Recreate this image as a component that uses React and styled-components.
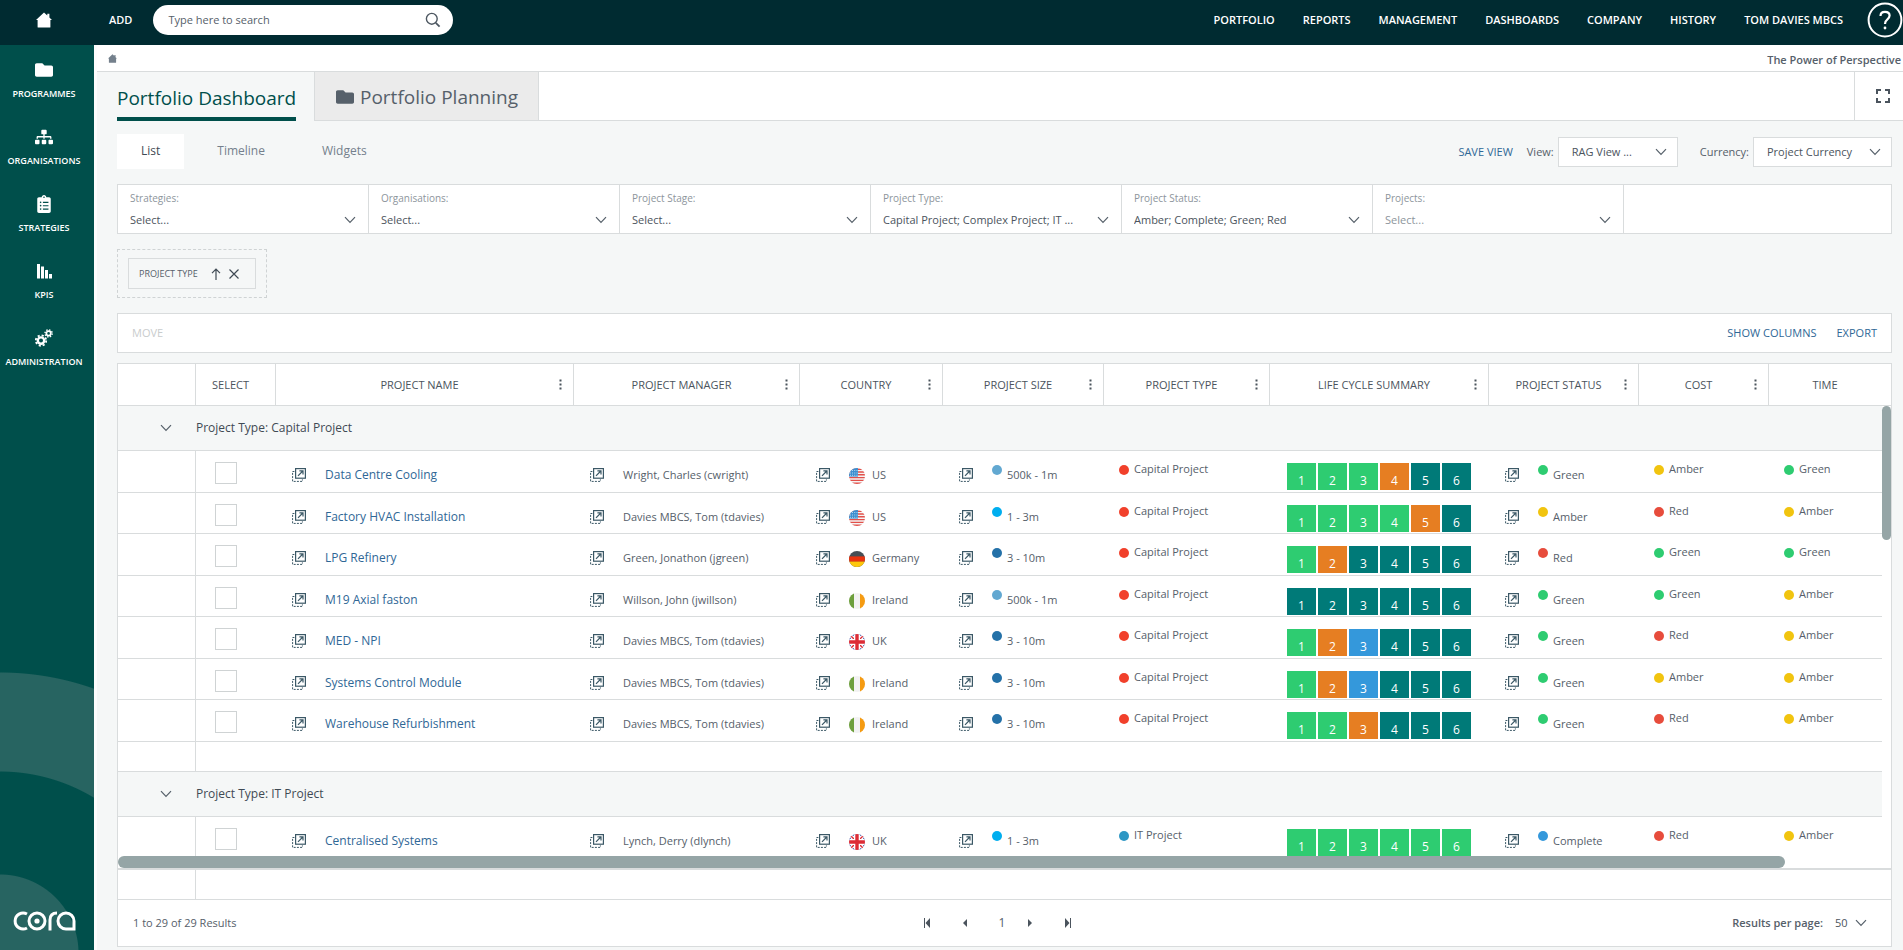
import { useState } from 'react';
import styled, { createGlobalStyle } from 'styled-components';
import { FaFolder, FaSitemap, FaClipboardList } from 'react-icons/fa';

const GlobalStyle = createGlobalStyle`
  * {
    box-sizing: border-box;
  }

  body {
    margin: 0;
    font-family: 'Open Sans', 'Noto Sans', sans-serif;
    font-size: 11px;
    line-height: 20px;
    color: #56606a;
    background: #f5f7f7;
  }

  button, input, select {
    font: inherit;
    color: inherit;
    margin: 0;
  }

  button {
    padding: 0;
    border: none;
    background: none;
    cursor: pointer;
  }

  a {
    color: inherit;
    text-decoration: none;
  }
`;

const navLinks = ['PORTFOLIO', 'REPORTS', 'MANAGEMENT', 'DASHBOARDS', 'COMPANY', 'HISTORY', 'TOM DAVIES MBCS'];

const filters = [
  { label: 'Strategies:', value: 'Select...' },
  { label: 'Organisations:', value: 'Select...' },
  { label: 'Project Stage:', value: 'Select...' },
  { label: 'Project Type:', value: 'Capital Project; Complex Project; IT ...' },
  { label: 'Project Status:', value: 'Amber; Complete; Green; Red' },
  { label: 'Projects:', value: 'Select...', muted: true }
];

const columns = [
  { width: 78 },
  { title: 'SELECT', width: 80 },
  { title: 'PROJECT NAME', width: 298, menu: true },
  { title: 'PROJECT MANAGER', width: 226, menu: true },
  { title: 'COUNTRY', width: 143, menu: true },
  { title: 'PROJECT SIZE', width: 161, menu: true },
  { title: 'PROJECT TYPE', width: 166, menu: true },
  { title: 'LIFE CYCLE SUMMARY', width: 219, menu: true },
  { title: 'PROJECT STATUS', width: 150, menu: true },
  { title: 'COST', width: 130, menu: true },
  { title: 'TIME' }
];

const ragColors = { Green: '#2ecc71', Amber: '#f1c40f', Red: '#e74c3c', Complete: '#3498db' };
const sizeColors = { '500k - 1m': '#62a8d1', '1 - 3m': '#00aeef', '3 - 10m': '#2471a8' };
const typeColors = { 'Capital Project': '#f1402b', 'IT Project': '#2e97c4' };
const stageColors = { g: '#2ecc71', o: '#e67e22', b: '#3498db', t: '#007a78' };

const tom = 'Davies MBCS, Tom (tdavies)';

const groups = [
  {
    type: 'Capital Project',
    rows: [
      ['Data Centre Cooling', 'Wright, Charles (cwright)', 'US', '500k - 1m', 'gggott', 'Green', 'Amber', 'Green'],
      ['Factory HVAC Installation', tom, 'US', '1 - 3m', 'ggggot', 'Amber', 'Red', 'Amber'],
      ['LPG Refinery', 'Green, Jonathon (jgreen)', 'Germany', '3 - 10m', 'gotttt', 'Red', 'Green', 'Green'],
      ['M19 Axial faston', 'Willson, John (jwillson)', 'Ireland', '500k - 1m', 'tttttt', 'Green', 'Green', 'Amber'],
      ['MED - NPI', tom, 'UK', '3 - 10m', 'gobttt', 'Green', 'Red', 'Amber'],
      ['Systems Control Module', tom, 'Ireland', '3 - 10m', 'gobttt', 'Green', 'Amber', 'Amber'],
      ['Warehouse Refurbishment', tom, 'Ireland', '3 - 10m', 'ggottt', 'Green', 'Red', 'Amber']
    ]
  },
  {
    type: 'IT Project',
    rows: [['Centralised Systems', 'Lynch, Derry (dlynch)', 'UK', '1 - 3m', 'gggggg', 'Complete', 'Red', 'Amber']]
  }
];

/* icons */

const HomeIcon = ({ size }) => (
  <svg width={size} height={size} viewBox="0 0 16 16" fill="currentColor" aria-hidden="true">
    <path d="M8 0.5 L11.3 3.6 V1.8 H13.4 V5.6 L16 8 H14.4 V15 Q14.4 15.6 13.8 15.6 H2.2 Q1.6 15.6 1.6 15 V8 H0 Z" />
  </svg>
);

const KpiIcon = () => (
  <svg width="15" height="15" viewBox="0 0 15 15" fill="currentColor" aria-hidden="true">
    <path d="M0 0h3v14.5H0zM4 2.5h3v12H4zM8 6h3v8.5H8zM12 10h3v4.5h-3z" />
  </svg>
);

const CogsIcon = () => (
  <svg width="18" height="18" viewBox="0 0 18 18" fill="none" stroke="currentColor" aria-hidden="true">
    <circle cx="6" cy="11.6" r="3.2" strokeWidth="2.4" />
    <circle cx="6" cy="11.6" r="5.2" strokeWidth="1.8" strokeDasharray="2.1 1.984" />
    <circle cx="13.6" cy="4.4" r="2.2" strokeWidth="1.7" />
    <circle cx="13.6" cy="4.4" r="3.6" strokeWidth="1.4" strokeDasharray="1.45 1.377" />
  </svg>
);

const SearchIcon = () => (
  <svg width="16" height="16" viewBox="0 0 16 16" fill="none" stroke="#4d5761" strokeWidth="1.4" aria-hidden="true">
    <circle cx="6.8" cy="6.8" r="5.4" />
    <path d="M10.8 10.8 L14.6 14.6" strokeWidth="1.8" />
  </svg>
);

const HelpIcon = () => (
  <svg width="36" height="36" viewBox="0 0 36 36" fill="none" stroke="#fff" aria-hidden="true">
    <circle cx="18" cy="18" r="16.4" strokeWidth="2" />
    <path d="M13.5 14 Q13.5 9.8 18 9.8 Q22.6 9.8 22.6 13.6 Q22.6 15.8 20.2 17.6 Q18 19.2 18 22" strokeWidth="2.2" />
    <circle cx="18" cy="26" r="1.4" fill="#fff" stroke="none" />
  </svg>
);

const ExpandIcon = () => (
  <svg width="14" height="14" viewBox="0 0 14 14" fill="none" stroke="#4b545d" strokeWidth="2" aria-hidden="true">
    <path d="M1 5V1h4M9 1h4v4M13 9v4H9M5 13H1V9" />
  </svg>
);

const Chevron = () => (
  <svg width="12" height="8" viewBox="0 0 12 8" fill="none" stroke="#56606a" strokeWidth="1.2" aria-hidden="true">
    <path d="M1 1.2 L6 6.4 L11 1.2" />
  </svg>
);

const ArrowUpIcon = () => (
  <svg width="10" height="12" viewBox="0 0 10 12" fill="none" stroke="#3f4a54" strokeWidth="1.2" aria-hidden="true">
    <path d="M5 12V1.2M1 5.2 L5 1.2 L9 5.2" />
  </svg>
);

const CloseIcon = () => (
  <svg width="10" height="10" viewBox="0 0 10 10" stroke="#3f4a54" strokeWidth="1.2" aria-hidden="true">
    <path d="M0.5 0.5 L9.5 9.5 M9.5 0.5 L0.5 9.5" />
  </svg>
);

const KebabIcon = () => (
  <svg width="3" height="11" viewBox="0 0 3 11" fill="#4b545d" aria-hidden="true">
    <path d="M0.5 0.5h2v2h-2zM0.5 4.5h2v2h-2zM0.5 8.5h2v2h-2z" />
  </svg>
);

const OpenIcon = () => (
  <svg width="14" height="14" viewBox="0 0 14 14" fill="none" stroke="#3b5866" aria-hidden="true">
    <rect x="3.6" y="0.6" width="9.8" height="9.6" strokeWidth="1.2" />
    <path d="M6 7.8 L10.8 3 M7.4 2.9 H11 V6.4" strokeWidth="1.2" />
    <path d="M2.4 3.5 H0.6 V13.4 H10.4 V11.4" strokeDasharray="2 1.2" />
  </svg>
);

const pagerPaths = {
  'First page': 'M0 0h1v10H0zM6 0v10L1.5 5z',
  'Previous page': 'M5 1v8L1 5z',
  'Next page': 'M1 1v8L5 5z',
  'Last page': 'M5 0h1v10H5zM0 0v10L4.5 5z'
};

const FlagArt = {
  US: (
    <>
      <rect width="16" height="16" fill="#f4f4f4" />
      <path d="M0 1.2h16M0 4h16M0 6.8h16M0 9.6h16M0 12.4h16M0 15.2h16" stroke="#e2504a" strokeWidth="1.4" />
      <rect width="9" height="8.6" fill="#3c8fd0" />
      <path d="M1 2.5h8M1 5h8M1 7.3h8" stroke="#fff" strokeWidth="0.8" strokeDasharray="0.8 1.4" />
    </>
  ),
  Germany: (
    <>
      <rect width="16" height="16" fill="#464e55" />
      <rect y="5.4" width="16" height="5.4" fill="#e8330f" />
      <rect y="10.6" width="16" height="5.4" fill="#fdc70c" />
    </>
  ),
  Ireland: (
    <>
      <rect width="16" height="16" fill="#f2f2f2" />
      <rect width="5" height="16" fill="#6d9f3c" />
      <rect x="11" width="5" height="16" fill="#f59b12" />
    </>
  ),
  UK: (
    <>
      <rect width="16" height="16" fill="#2d419b" />
      <path d="M0 0 L16 16 M16 0 L0 16" stroke="#fff" strokeWidth="4" />
      <path d="M0 0 L16 16 M16 0 L0 16" stroke="#dd2c36" strokeWidth="1.4" />
      <path d="M8 0V16M0 8H16" stroke="#fff" strokeWidth="6" />
      <path d="M8 0V16M0 8H16" stroke="#dd2c36" strokeWidth="3.4" />
    </>
  )
};

const CoraLogo = () => (
  <svg width="63" height="20" viewBox="0 0 63 20" fill="none" stroke="#fff" strokeWidth="3" role="img" aria-label="cora">
    <path d="M14 3 A8 8 0 1 0 14 17" />
    <circle cx="24" cy="10" r="8" />
    <circle cx="24" cy="10" r="2.6" fill="#fff" stroke="none" />
    <path d="M37 19.5 V9 Q37 2 44 2" />
    <path d="M61 19.5 V10 A8 8 0 1 0 53 18 H61" />
  </svg>
);

const sideItems = [
  { label: 'PROGRAMMES', icon: <FaFolder size={18} /> },
  { label: 'ORGANISATIONS', icon: <FaSitemap size={18} /> },
  { label: 'STRATEGIES', icon: <FaClipboardList size={18} /> },
  { label: 'KPIS', icon: <KpiIcon /> },
  { label: 'ADMINISTRATION', icon: <CogsIcon /> }
];

function SelectBox({ id, value, muted, label }) {
  return (
    <SelectWrap>
      <NativeSelect id={id} $muted={muted} aria-label={label} defaultValue={value}>
        <option>{value}</option>
      </NativeSelect>
      <Chevron />
    </SelectWrap>
  );
}

function OpenButton({ label }) {
  return (
    <IconButton aria-label={label}>
      <OpenIcon />
    </IconButton>
  );
}

function Tag({ value, colors }) {
  return (
    <TagCell>
      <Dot $color={colors[value]} $drop />
      {value}
    </TagCell>
  );
}

function ProjectRow({ row, type }) {
  const [name, manager, country, size, stages, status, cost, time] = row;

  return (
    <Row>
      <IndentCell />
      <Cell>
        <Checkbox type="checkbox" aria-label={`Select ${name}`} />
      </Cell>
      <Cell>
        <LinkCell>
          <OpenButton label={`Open ${name}`} />
          <ProjectLink href="#">{name}</ProjectLink>
        </LinkCell>
      </Cell>
      <Cell>
        <LinkCell>
          <OpenButton label={`Open ${manager}`} />
          {manager}
        </LinkCell>
      </Cell>
      <Cell>
        <LinkCell>
          <OpenButton label={`Open ${country}`} />
          <Value $gap={7}>
            <Flag viewBox="0 0 16 16" aria-hidden="true">
              {FlagArt[country]}
            </Flag>
            {country}
          </Value>
        </LinkCell>
      </Cell>
      <Cell>
        <LinkCell>
          <OpenButton label={`Open size ${size}`} />
          <Value $gap={5}>
            <Dot $color={sizeColors[size]} />
            {size}
          </Value>
        </LinkCell>
      </Cell>
      <Cell>
        <Tag value={type} colors={typeColors} />
      </Cell>
      <Cell>
        <Stages>
          {stages.split('').map((stage, i) => (
            <Stage key={i} $color={stageColors[stage]}>
              {i + 1}
            </Stage>
          ))}
        </Stages>
      </Cell>
      <Cell>
        <LinkCell>
          <OpenButton label={`Open status ${status}`} />
          <Value $gap={5}>
            <Dot $color={ragColors[status]} />
            {status}
          </Value>
        </LinkCell>
      </Cell>
      <Cell>
        <Tag value={cost} colors={ragColors} />
      </Cell>
      <Cell>
        <Tag value={time} colors={ragColors} />
      </Cell>
    </Row>
  );
}

function ProjectGroup({ group }) {
  const [open, setOpen] = useState(true);

  return (
    <tbody>
      <GroupRow>
        <GroupCell>
          <GroupToggle onClick={() => setOpen(!open)} aria-expanded={open} aria-label={`Toggle ${group.type}`}>
            <Chevron />
          </GroupToggle>
        </GroupCell>
        <GroupCell colSpan={10}>Project Type: {group.type}</GroupCell>
      </GroupRow>
      {open && group.rows.map((row) => <ProjectRow key={row[0]} row={row} type={group.type} />)}
      <SpacerRow>
        <IndentCell />
        <Cell colSpan={10} />
      </SpacerRow>
    </tbody>
  );
}

function PagerButton({ label }) {
  return (
    <PageButton aria-label={label}>
      <svg width="6" height="10" viewBox="0 0 6 10" fill="#4b545d" aria-hidden="true">
        <path d={pagerPaths[label]} />
      </svg>
    </PageButton>
  );
}

export default function App() {
  const [view, setView] = useState('List');

  return (
    <Shell>
      <GlobalStyle />
      <TopBar>
        <HomeLink href="#" aria-label="Home">
          <HomeIcon size={16} />
        </HomeLink>
        <AddButton>ADD</AddButton>
        <Search>
          <SearchInput type="search" placeholder="Type here to search" aria-label="Search" />
          <SearchIcon />
        </Search>
        <Nav>
          {navLinks.map((link) => (
            <a key={link} href="#">
              {link}
            </a>
          ))}
        </Nav>
        <HelpButton aria-label="Help">
          <HelpIcon />
        </HelpButton>
      </TopBar>

      <Body>
        <Sidebar>
          {sideItems.map((item) => (
            <SideLink key={item.label} href="#">
              <SideIcon>{item.icon}</SideIcon>
              {item.label}
            </SideLink>
          ))}
          <LogoBox>
            <CoraLogo />
          </LogoBox>
        </Sidebar>

        <Main>
          <Breadcrumb>
            <a href="#" aria-label="Dashboard home">
              <HomeIcon size={9} />
            </a>
            <strong>The Power of Perspective</strong>
          </Breadcrumb>

          <PageTabs>
            <ActiveTab>
              <TabTitle href="#">Portfolio Dashboard</TabTitle>
            </ActiveTab>
            <PlanningTab href="#">
              <FaFolder size={18} />
              Portfolio Planning
            </PlanningTab>
            <TabFill />
            <ExpandButton aria-label="Full screen">
              <ExpandIcon />
            </ExpandButton>
          </PageTabs>

          <Content>
            <ViewRow>
              {['List', 'Timeline', 'Widgets'].map((tab) => (
                <ViewTab key={tab} $active={tab === view} onClick={() => setView(tab)}>
                  {tab}
                </ViewTab>
              ))}
              <ViewOptions>
                <TextButton>SAVE VIEW</TextButton>
                <Option>
                  <label htmlFor="view">View:</label>
                  <BoxedSelect $width={120}>
                    <SelectBox id="view" value="RAG View ..." />
                  </BoxedSelect>
                </Option>
                <Option $spaced>
                  <label htmlFor="currency">Currency:</label>
                  <BoxedSelect $width={139}>
                    <SelectBox id="currency" value="Project Currency" />
                  </BoxedSelect>
                </Option>
              </ViewOptions>
            </ViewRow>

            <Filters>
              {filters.map((filter, i) => (
                <Filter key={filter.label}>
                  <FilterLabel htmlFor={`filter-${i}`}>{filter.label}</FilterLabel>
                  <SelectBox id={`filter-${i}`} value={filter.value} muted={filter.muted} />
                </Filter>
              ))}
            </Filters>

            <GroupPanel>
              <GroupChip>
                <ChipLabel>PROJECT TYPE</ChipLabel>
                <button aria-label="Sort ascending">
                  <ArrowUpIcon />
                </button>
                <button aria-label="Remove grouping">
                  <CloseIcon />
                </button>
              </GroupChip>
            </GroupPanel>

            <Toolbar>
              <TextButton disabled>MOVE</TextButton>
              <ToolbarRight>
                <TextButton>SHOW COLUMNS</TextButton>
                <TextButton>EXPORT</TextButton>
              </ToolbarRight>
            </Toolbar>

            <Grid>
              <Pane>
                <Table>
                  <colgroup>
                    {columns.map((col, i) => (
                      <Col key={i} $width={col.width} />
                    ))}
                  </colgroup>
                  <thead>
                    <tr>
                      {columns.map((col, i) => (
                        <HeadCell key={i}>
                          <HeadInner>
                            <HeadTitle>{col.title}</HeadTitle>
                            <MenuSlot>
                              {col.menu && (
                                <button aria-label={`${col.title} menu`}>
                                  <KebabIcon />
                                </button>
                              )}
                            </MenuSlot>
                          </HeadInner>
                        </HeadCell>
                      ))}
                    </tr>
                  </thead>
                  {groups.map((group) => (
                    <ProjectGroup key={group.type} group={group} />
                  ))}
                </Table>
                <VerticalTrack>
                  <VerticalThumb />
                </VerticalTrack>
                <HorizontalTrack>
                  <HorizontalThumb />
                </HorizontalTrack>
              </Pane>
              <SummaryRow>
                <SummaryIndent />
              </SummaryRow>
              <Pager>
                <span>1 to 29 of 29 Results</span>
                <Pages>
                  <PagerButton label="First page" />
                  <PagerButton label="Previous page" />
                  <PageNumber>1</PageNumber>
                  <PagerButton label="Next page" />
                  <PagerButton label="Last page" />
                </Pages>
                <PageSize>
                  <PageSizeLabel htmlFor="page-size">Results per page:</PageSizeLabel>
                  <PageSizeSelect>
                    <SelectBox id="page-size" value="50" />
                  </PageSizeSelect>
                </PageSize>
              </Pager>
            </Grid>
          </Content>
        </Main>
      </Body>
    </Shell>
  );
}

const line = '#d9dcdd';

const Shell = styled.div`
  display: flex;
  flex-direction: column;
  height: 100vh;
  overflow: hidden;
`;

const TopBar = styled.header`
  display: flex;
  align-items: center;
  flex: none;
  height: 45px;
  padding-bottom: 5px;
  color: #fff;
  background: #002b31;
  font-weight: 600;
`;

const HomeLink = styled.a`
  display: flex;
  justify-content: center;
  width: 88px;
`;

const AddButton = styled.button`
  margin: 0 21px;
`;

const Search = styled.div`
  display: flex;
  align-items: center;
  width: 300px;
  height: 30px;
  padding: 0 12px 0 15px;
  border-radius: 15px;
  background: #fff;
`;

const SearchInput = styled.input`
  flex: 1;
  min-width: 0;
  padding: 0;
  border: none;
  outline: none;
  background: none;
  font-weight: 400;
  color: #56606a;

  &::placeholder {
    color: #56606a;
    opacity: 1;
  }
`;

const Nav = styled.nav`
  display: flex;
  gap: 28px;
  margin-left: auto;
  white-space: nowrap;
`;

const HelpButton = styled.button`
  display: flex;
  margin-left: 24px;
`;

const Body = styled.div`
  display: flex;
  flex: 1;
  min-height: 0;
`;

const Sidebar = styled.aside`
  display: flex;
  flex-direction: column;
  flex: none;
  width: 94px;
  padding-top: 15px;
  color: #fff;
  background: radial-gradient(
    circle at 0 calc(100% + 3px),
    #276461 78px,
    #004f4b 79px,
    #004f4b 181px,
    #276461 182px,
    #276461 280px,
    #004f4b 281px
  );
`;

const SideLink = styled.a`
  display: flex;
  flex-direction: column;
  align-items: center;
  height: 67px;
  padding-right: 6px;
  font-size: 9px;
  font-weight: 600;
  line-height: 16px;
`;

const SideIcon = styled.span`
  display: flex;
  align-items: center;
  height: 20px;
  margin-bottom: 6px;
`;

const LogoBox = styled.div`
  margin-top: auto;
  padding: 0 0 13px 13px;
`;

const Main = styled.main`
  display: flex;
  flex-direction: column;
  flex: 1;
  min-width: 0;
  border-left: 3px solid #fdfdfd;
`;

const Breadcrumb = styled.div`
  display: flex;
  align-items: center;
  justify-content: space-between;
  height: 27px;
  padding: 4px 2px 0 11px;
  border-bottom: 1px solid ${line};
  background: #fff;
  color: #74808c;

  a {
    display: flex;
    align-self: flex-start;
    padding-top: 5px;
  }

  strong {
    font-weight: 600;
    color: #56606a;
  }
`;

const PageTabs = styled.div`
  display: flex;
  height: 49px;
  font-size: 19px;
  line-height: 26px;
`;

const ActiveTab = styled.div`
  display: flex;
  width: 217px;
  padding-left: 20px;
`;

const TabTitle = styled.a`
  padding-top: 13px;
  border-bottom: 4px solid #004f4b;
  color: #004f4b;
  white-space: nowrap;
`;

const PlanningTab = styled.a`
  display: flex;
  align-items: center;
  gap: 6px;
  width: 225px;
  padding: 2px 0 0 21px;
  border: solid ${line};
  border-width: 0 1px 1px;
  background: #ebebeb;
  white-space: nowrap;
`;

const TabFill = styled.div`
  flex: 1;
  border-bottom: 1px solid ${line};
  background: #fff;
`;

const ExpandButton = styled.button`
  display: flex;
  align-items: center;
  justify-content: center;
  width: 49px;
  padding-left: 8px;
  border: solid ${line};
  border-width: 0 0 1px 1px;
  background: #fff;
`;

const Content = styled.div`
  display: flex;
  flex-direction: column;
  flex: 1;
  min-height: 0;
  padding: 13px 11px 3px 20px;
`;

const ViewRow = styled.div`
  display: flex;
  align-items: center;
  margin-bottom: 15px;
`;

const ViewTab = styled.button`
  height: 35px;
  margin-right: 9px;
  padding: 0 24px 2px;
  font-size: 12px;
  color: ${(props) => (props.$active ? '#3f4a54' : '#74808c')};
  background: ${(props) => (props.$active ? '#fff' : 'none')};
`;

const ViewOptions = styled.div`
  display: flex;
  align-items: center;
  gap: 14px;
  margin-left: auto;
`;

const Option = styled.div`
  display: flex;
  align-items: center;
  gap: 4px;
  margin-left: ${(props) => (props.$spaced ? 8 : 0)}px;
`;

const TextButton = styled.button`
  color: #2f6796;

  &:disabled {
    color: #c9cccd;
    cursor: default;
  }
`;

const SelectWrap = styled.div`
  display: grid;
  grid-template-columns: minmax(0, 1fr) 12px;
  align-items: center;
  flex: 1;

  select {
    grid-area: 1 / 1 / 2 / 3;
    padding-right: 16px;
  }

  svg {
    grid-area: 1 / 2;
    pointer-events: none;
  }
`;

const NativeSelect = styled.select`
  width: 100%;
  padding: 0;
  border: none;
  outline: none;
  appearance: none;
  background: none;
  color: ${(props) => (props.$muted ? '#8d959c' : '#4b545d')};
`;

const BoxedSelect = styled.div`
  display: flex;
  width: ${(props) => props.$width}px;
  height: 30px;
  padding: 0 10px 0 13px;
  border: 1px solid ${line};
  background: #fff;
`;

const Filters = styled.div`
  display: flex;
  min-height: 50px;
  margin-bottom: 15px;
  border: 1px solid ${line};
  background: #fff;
`;

const Filter = styled.div`
  width: 251px;
  padding: 3px 12px 0;
  border-right: 1px solid ${line};
`;

const FilterLabel = styled.label`
  display: block;
  margin-bottom: 2px;
  font-size: 10px;
  color: #8d959c;
`;

const GroupPanel = styled.div`
  align-self: flex-start;
  margin-bottom: 15px;
  padding: 8px 10px;
  border: 1px dashed #cfd3d4;
`;

const GroupChip = styled.div`
  display: flex;
  align-items: center;
  gap: 8px;
  width: 128px;
  height: 31px;
  padding-left: 10px;
  border: 1px solid ${line};
  font-size: 9px;
  white-space: nowrap;

  button {
    display: flex;
  }
`;

const ChipLabel = styled.span`
  padding-right: 5px;
`;

const Toolbar = styled.div`
  display: flex;
  align-items: center;
  justify-content: space-between;
  height: 40px;
  margin-bottom: 10px;
  padding: 0 14px;
  border: 1px solid ${line};
  background: #fff;
`;

const ToolbarRight = styled.div`
  display: flex;
  gap: 20px;
`;

const Grid = styled.section`
  display: flex;
  flex-direction: column;
  flex: 1;
  min-height: 0;
  border: 1px solid ${line};
  background: #fff;
`;

const Pane = styled.div`
  position: relative;
  flex: 1;
  min-height: 0;
  overflow: hidden;
`;

const Table = styled.table`
  width: 100%;
  min-width: 1750px;
  table-layout: fixed;
  border-spacing: 0;
`;

const Col = styled.col`
  width: ${(props) => (props.$width ? `${props.$width}px` : 'auto')};
`;

const HeadCell = styled.th`
  height: 42px;
  padding: 0;
  border: solid ${line};
  border-width: 0 1px 1px 0;
  font-weight: 400;
  color: #4b545d;

  &:last-child {
    border-right: none;
  }
`;

const HeadInner = styled.div`
  display: flex;
  align-items: center;
  padding-left: 16px;
`;

const HeadTitle = styled.span`
  flex: 1;
  white-space: nowrap;
`;

const MenuSlot = styled.span`
  display: flex;
  justify-content: center;
  width: 26px;

  button {
    display: flex;
  }
`;

const Row = styled.tr`
  height: 42px;

  /* rows alternate so the pitch stays close to 41.5px */
  &:nth-child(odd) {
    height: 41px;
  }
`;

const GroupRow = styled.tr`
  height: 45px;
`;

const SpacerRow = styled.tr`
  height: 30px;
`;

const Cell = styled.td`
  padding: 0;
  border-bottom: 1px solid ${line};
  vertical-align: top;
  white-space: nowrap;
`;

const IndentCell = styled(Cell)`
  border-right: 1px solid ${line};
`;

const GroupCell = styled(Cell)`
  vertical-align: middle;
  background: #f5f7f7;
  font-size: 12px;
  color: #3f4a54;
`;

const GroupToggle = styled.button`
  display: flex;
  margin-left: 42px;
`;

const Checkbox = styled.input`
  display: block;
  width: 22px;
  height: 22px;
  margin: 11px 0 0 19px;
  border: 1px solid #cfd3d4;
  appearance: none;
  background: #fff;

  &:checked {
    background: #004f4b;
  }
`;

const LinkCell = styled.div`
  display: flex;
  align-items: flex-start;
  gap: 19px;
  padding: 14px 0 0 16px;
`;

const IconButton = styled.button`
  display: flex;
  padding-top: 3px;
`;

const ProjectLink = styled.a`
  font-size: 12px;
  color: #2f6796;
`;

const Value = styled.span`
  display: flex;
  gap: ${(props) => props.$gap}px;
`;

const Flag = styled.svg`
  width: 16px;
  height: 16px;
  margin-top: 3px;
  border-radius: 50%;
`;

const TagCell = styled.div`
  display: flex;
  gap: 5px;
  padding: 8px 0 0 15px;
`;

const Dot = styled.span`
  width: 10px;
  height: 10px;
  margin-top: ${(props) => (props.$drop ? 6 : 0)}px;
  border-radius: 50%;
  background: ${(props) => props.$color};
`;

const Stages = styled.div`
  display: flex;
  gap: 2px;
  padding: 12px 0 0 17px;
`;

const Stage = styled.span`
  width: 29px;
  height: 27px;
  padding-top: 8px;
  font-size: 12px;
  text-align: center;
  color: #fff;
  background: ${(props) => props.$color};
`;

const VerticalTrack = styled.div`
  position: absolute;
  top: 42px;
  right: 0;
  bottom: 0;
  width: 9px;
  background: #fff;
`;

const VerticalThumb = styled.div`
  height: 134px;
  border-radius: 5px;
  background: #95a5a6;
`;

const HorizontalTrack = styled.div`
  position: absolute;
  right: 0;
  bottom: 0;
  left: 0;
  height: 12px;
  background: #fff;
`;

const HorizontalThumb = styled.div`
  width: 94%;
  height: 12px;
  border-radius: 6px;
  background: #95a5a6;
`;

const SummaryRow = styled.div`
  display: flex;
  height: 32px;
  border: solid ${line};
  border-width: 2px 0 1px;
`;

const SummaryIndent = styled.div`
  width: 78px;
  border-right: 1px solid ${line};
`;

const Pager = styled.footer`
  display: grid;
  grid-template-columns: 1fr auto 1fr;
  align-items: center;
  height: 46px;
  padding: 0 24px 0 15px;
`;

const Pages = styled.div`
  display: flex;
  align-items: center;
  padding-right: 5px;
`;

const PageButton = styled.button`
  display: flex;
  justify-content: center;
  width: 38px;
`;

const PageNumber = styled.span`
  width: 18px;
  margin-left: 9px;
  font-size: 12px;
  text-align: center;
`;

const PageSize = styled.div`
  display: flex;
  align-items: center;
  justify-content: flex-end;
  gap: 12px;
`;

const PageSizeLabel = styled.label`
  font-weight: 600;
`;

const PageSizeSelect = styled.div`
  display: flex;
  width: 32px;
`;
